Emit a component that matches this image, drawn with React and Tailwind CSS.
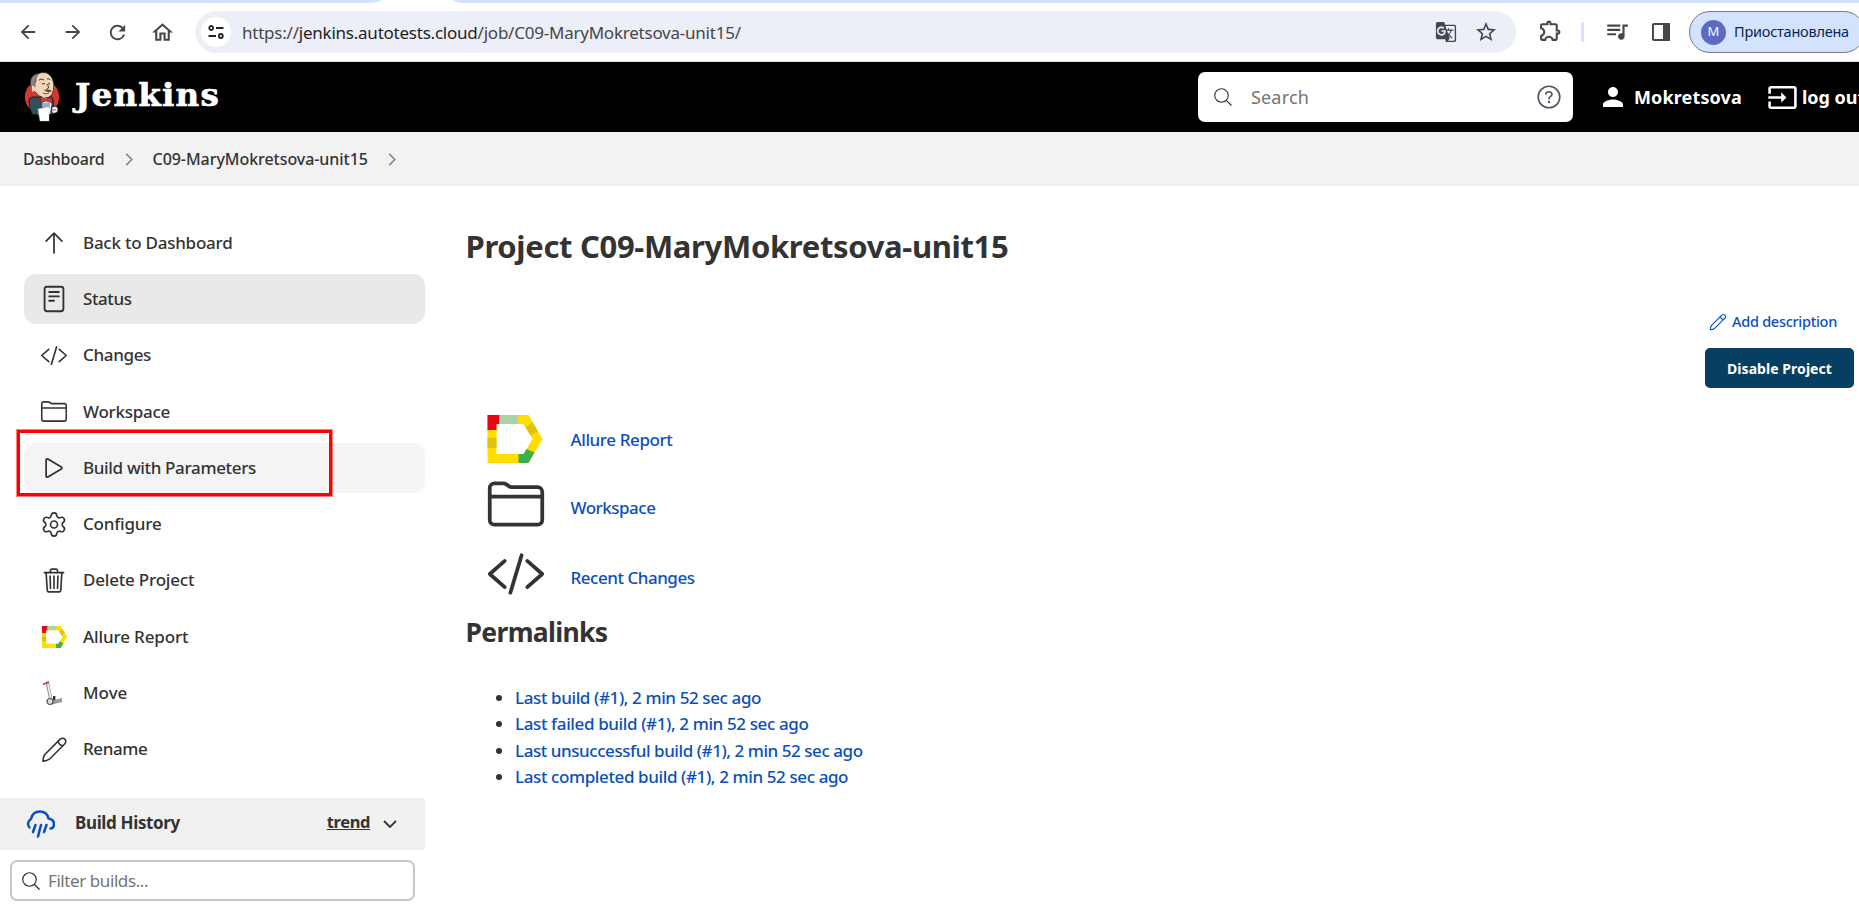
import React from "react";
import { Settings } from "lucide-react";
import {
  MdArrowBack, MdArrowForward, MdRefresh, MdOutlineHome, MdGTranslate,
  MdStarOutline, MdOutlineExtension, MdQueueMusic, MdPerson, MdInput,
} from "react-icons/md";

function Line({ paths, className, width = 32 }) {
  return (
    <svg viewBox="0 0 512 512" className={className} fill="none" stroke="currentColor" strokeWidth={width} strokeLinecap="round" strokeLinejoin="round">
      {paths.map((d) => <path key={d} d={d} />)}
    </svg>
  );
}

const CODE = ["M160 368L32 256l128-112", "M352 368l128-112-128-112", "M304 96l-96 320"];
const FOLDER = [
  "M440 432H72a40 40 0 01-40-40V120a40 40 0 0140-40h75.89a40 40 0 0122.19 6.72l27.84 18.56a40 40 0 0022.19 6.72H440a40 40 0 0140 40v240a40 40 0 01-40 40z",
  "M32 192h448",
];
const PLAY = ["M112 111v290c0 17.44 17 28.52 31 20.16l247.9-148.37c12.12-7.25 12.12-26.33 0-33.58L143 90.84c-14-8.36-31 2.72-31 20.16z"];
const TRASH = [
  "M112 112l20 320c.95 18.49 14.4 32 32 32h184c17.67 0 30.87-13.51 32-32l20-320",
  "M80 112h352",
  "M192 112V72a23.93 23.93 0 0124-24h80a23.93 23.93 0 0124 24v40",
  "M256 176v224M184 176l8 224M328 176l-8 224",
];
const ARROW_UP = ["M112 220L256 76l144 144", "M256 96v340"];
const DOC = ["M128 32h256a44 44 0 0144 44v360a44 44 0 01-44 44H128a44 44 0 01-44-44V76a44 44 0 0144-44z", "M168 128h176M168 208h176M168 288h88"];
const PENCIL = [
  "M36 476Q40 400 72 352L364 60a62 62 0 0188 0 62 62 0 010 88L160 440Q112 472 36 476z",
  "M326 98Q336 180 418 184",
];
const SEARCH = ["M221 64a157 157 0 10157 157A157 157 0 00221 64z", "M338 338L448 448"];

function Allure({ className }) {
  return (
    <svg viewBox="0 0 55 48" className={className}>
      <path d="M0 0H41L55 24L41 48H0ZM9 9V39H36L45 24L36 9Z" fill="#ffdd00" fillRule="evenodd" />
      <path d="M0 0H12V9H9V15H0Z" fill="#e30613" />
      <path d="M12 0H30V9H12Z" fill="#a7d3a6" />
      <path d="M0 23H9V33H0Z" fill="#e0c213" />
      <path d="M38 12.2L45 7L50.500 16.500L43 20.500Z" fill="#e0c213" />
      <path d="M31 39H36L39 34L47 37.500L41 48H31Z" fill="#3eaf49" />
    </svg>
  );
}

function Segway({ className }) {
  return (
    <svg viewBox="0 0 26 26" className={className} fill="none">
      <path d="M2 4.5L6 2.5L8 2" stroke="#b8434a" strokeWidth="1.6" />
      <path d="M6.5 3L10 20" stroke="#8c8c8c" strokeWidth="3.4" />
      <path d="M7 4L10 19" stroke="#eee" strokeWidth="1.8" />
      <path d="M10 21L21 18V22L11 24.5Z" fill="#9a9a9a" />
      <path d="M12 16h2.4v4H12z" fill="#333" />
      <circle cx="9" cy="21.5" r="3" fill="#ddd" stroke="#555" strokeWidth="1.2" />
    </svg>
  );
}

function Butler() {
  return (
    <svg viewBox="0 0 36 50" className="h-[50px] w-9">
      <ellipse cx="18" cy="25" rx="17.2" ry="17" fill="#d33833" />
      <path d="M5 29Q4 26 9 25L28 25Q30 28 29 42Q20 45 8 42Q5 36 5 29Z" fill="#335061" stroke="#111" strokeWidth=".8" />
      <path d="M8 17Q4 5 14 1.5Q24-2 28 6Q31 12 29.5 18Q28 26 21 26Q15 25 12 21L9 18Z" fill="#f0d6b7" stroke="#222" strokeWidth=".8" />
      <path d="M7 16Q4 3 15 1.3Q11 5 12 9Q10 12 11 15L9 18Z" fill="#8a8685" stroke="#222" strokeWidth=".6" />
      <path d="M8 14q3-1 3 2t-2 4q-2-2-1-6z" fill="#f0d6b7" />
      <path d="M15 8q3-2 5 0M23 7q2-1 3 1M18 12q1-1 3 0M24 12q1-1 2 0M23 12q3 4 0 5" stroke="#222" strokeWidth=".9" fill="none" />
      <path d="M20 18q4-2 8 1q-3 3-8-1z" fill="#6d4b3c" />
      <path d="M19 21q3 2 6 0" stroke="#7a2a22" strokeWidth=".8" fill="none" />
      <path d="M18 25L28 28L26 42L19 40Z" fill="#fff" />
      <path d="M16 25l6 2 6-2v6l-6-2-5 2z" fill="#d33833" stroke="#601" strokeWidth=".5" />
      <path d="M18 31l8-1v6h-7z" fill="#8fb0c4" />
      <path d="M14 37L25 35L25 49L16 49Z" fill="#fff" stroke="#ccc" strokeWidth=".4" />
      <path d="M28 35q6-2 6 3q-1 4-6 3z" fill="#fff" stroke="#222" strokeWidth=".7" />
      <path d="M29 38h3" stroke="#222" strokeWidth=".7" />
    </svg>
  );
}

function Chevron({ className }) {
  return (
    <svg viewBox="0 0 8 14" className={className} fill="none" stroke="currentColor" strokeWidth="1.8"><path d="M1 1l6 6-6 6" /></svg>
  );
}

const menu = [
  ["Back to Dashboard", <Line paths={ARROW_UP} className="size-[28px]" />, "", "tracking-[-0.24px]"],
  ["Status", <Line paths={DOC} className="size-[28px]" width={34} />, "bg-[#e9e9e9]", "tracking-[-0.42px]"],
  ["Changes", <Line paths={CODE} className="size-[29px]" width={30} />, "", "tracking-[-0.34px]"],
  ["Workspace", <Line paths={FOLDER} className="size-[29px]" width={28} />, "", "tracking-[-0.26px]"],
  ["Build with Parameters", <Line paths={PLAY} className="size-[28px]" />, "bg-[#f4f4f4]", "tracking-[-0.34px]"],
  ["Configure", <Settings className="size-[29px]" strokeWidth={1.4} />, "", "tracking-[-0.2px]"],
  ["Delete Project", <Line paths={TRASH} className="size-[29px]" width={30} />, "", "tracking-[-0.2px]"],
  ["Allure Report", <Allure className="h-[22px] w-[25px]" />, "", "tracking-[-0.13px]"],
  ["Move", <Segway className="size-[26px]" />, "", ""],
  ["Rename", <Line paths={PENCIL} className="size-[27px]" width={30} />, "", "tracking-[-0.42px]"],
];

const permalinks = [
  ["Last build (#1), 2 min 52 sec ago", "tracking-[-0.39px]"],
  ["Last failed build (#1), 2 min 52 sec ago", "tracking-[-0.38px]"],
  ["Last unsuccessful build (#1), 2 min 52 sec ago", "tracking-[-0.44px]"],
  ["Last completed build (#1), 2 min 52 sec ago", "tracking-[-0.39px]"],
];

export default function App() {
  return (
    <div className="flex h-[907px] w-[1859px] flex-col overflow-hidden bg-white font-['Noto_Sans','Open_Sans',sans-serif] text-[#333]">
      <div className="h-[3px] shrink-0 bg-[#d3e3fd]">
        <svg viewBox="0 0 480 3" className="h-[3px] w-[480px]" fill="#fff"><path d="M0 3Q2 3 10 3ZM372 3Q378 2.5 382 0H452Q456 2.5 462 3Z" /></svg>
      </div>
      <div className="flex h-[58px] shrink-0 items-center bg-white text-[#474747]">
        <MdArrowBack className="ml-[17px] size-[22px] shrink-0" />
        <MdArrowForward className="ml-[23px] size-[22px] shrink-0" />
        <MdRefresh className="ml-[22px] size-[23px] shrink-0" />
        <MdOutlineHome className="ml-[21px] size-[25px] shrink-0" />
        <div className="ml-[20px] flex h-[42px] w-[1321px] shrink-0 items-center rounded-full bg-[#eceef8]">
          <div className="ml-[6px] flex size-[30px] items-center justify-center rounded-full bg-white">
            <svg viewBox="0 0 16 14" className="h-[14px] w-4" fill="none" stroke="#222" strokeWidth="1.8"><circle cx="3.2" cy="3" r="2" /><path d="M8 3h7.5M.5 11H8" /><circle cx="12.8" cy="11" r="2" /></svg>
          </div>
          <span className="ml-[11px] mt-px whitespace-nowrap text-[17px] leading-6 tracking-[-0.23px]">
            <span>https://</span><span className="text-[#1f1f1f]">jenkins.autotests.cloud</span><span>/job/C09-MaryMokretsova-unit15/</span>
          </span>
          <MdGTranslate className="ml-auto size-[22px]" />
          <MdStarOutline className="ml-[17px] mr-[18px] size-[24px]" />
        </div>
        <MdOutlineExtension className="-mt-[3px] ml-[22px] size-[25px] shrink-0" />
        <div className="ml-[18px] h-5 w-[3px] shrink-0 rounded bg-[#d3e3fd]" />
        <MdQueueMusic className="-mt-[3px] ml-[20px] size-[26px] shrink-0" />
        <svg viewBox="0 0 18 18" className="ml-[22px] size-[18px] shrink-0"><rect x="1" y="1" width="16" height="16" rx="1" fill="none" stroke="currentColor" strokeWidth="2" /><path d="M11 0h7v18h-7z" fill="currentColor" /></svg>
        <div className="ml-[19px] flex h-[42px] w-[176px] shrink-0 items-center rounded-full border border-[#777b82] bg-[#d3e3fd]">
          <div className="ml-[11px] flex size-[25px] shrink-0 items-center justify-center rounded-full bg-[#5c6bc0] text-[13px] text-white">M</div>
          <span className="ml-[8px] whitespace-nowrap text-[14.5px] tracking-[-0.23px] text-[#0d2353]">Приостановлена</span>
        </div>
      </div>
      <div className="h-px shrink-0 bg-[#dfe3e0]" />

      <header className="flex h-[70px] shrink-0 items-center bg-black text-white">
        <div className="ml-6 flex items-center"><Butler /></div>
        <span className="-mt-1 ml-[15px] font-['DejaVu_Serif'] text-[32.5px] font-bold leading-10 tracking-[1.2px] [-webkit-text-stroke:0.7px_white]">Jenkins</span>
        <div className="ml-auto mr-[25px] flex h-[50px] w-[375px] items-center rounded-[7px] bg-white">
          <Line paths={SEARCH} className="ml-[14px] size-[22px] text-[#333]" width={26} />
          <span className="ml-[17px] mt-px text-[18px] tracking-[0.17px] text-[#757575]">Search</span>
          <svg viewBox="0 0 24 24" className="ml-auto mr-[12px] size-6" fill="none" stroke="#4d545d" strokeWidth="1.6" strokeLinecap="round"><circle cx="12" cy="12" r="10.8" /><path d="M8.9 9.2Q9.2 6.8 12 6.8Q15 6.9 15 9.3Q15 10.7 13.3 11.6Q12 12.4 12 14" /><circle cx="12" cy="17" r=".5" fill="#4d545d" /></svg>
        </div>
        <div className="flex w-[261px] shrink-0 items-center whitespace-nowrap text-[18px] font-bold">
          <MdPerson className="size-[30px] shrink-0" />
          <span className="ml-[6px] mt-px w-[108px] tracking-[0.13px]">Mokretsova</span>
          <MdInput className="ml-[25px] size-[31px] shrink-0" />
          <span className="ml-[4px] mt-px">log out</span>
        </div>
      </header>

      <nav className="flex h-[54px] shrink-0 items-center bg-[#f2f2f2] pl-[23px] text-[16px] font-medium">
        <span className="tracking-[-0.26px]">Dashboard</span>
        <Chevron className="ml-[20px] h-[13px] w-2 text-[#888]" />
        <span className="ml-[20px] tracking-[-0.05px]">C09-MaryMokretsova-unit15</span>
        <Chevron className="ml-[20px] h-[13px] w-2 text-[#888]" />
      </nav>

      <div className="flex min-h-0 flex-1">
        <aside className="relative w-[425px] shrink-0 pt-[32px]">
          <div className="flex flex-col gap-[6.25px] pl-6">
            {menu.map(([label, icon, bg, tracking]) => (
              <div key={label} className={"flex h-[50px] items-center rounded-xl text-[17px] font-medium " + bg}>
                <div className="ml-4 flex w-[28px] shrink-0 justify-center">{icon}</div>
                <span className={"-mt-px ml-[15px] " + tracking}>{label}</span>
              </div>
            ))}
          </div>
          <div className="absolute left-[17px] top-[244px] h-[66px] w-[315px] border-[3px] border-[#ff0000] shadow-[0_0_0_1px_#ff000080]" />
          <div className="mt-[24px] flex h-[52px] items-center bg-[#f1f1f1] font-bold text-[17px]">
            <svg viewBox="0 0 30 28" className="-mt-px ml-[25px] h-7 w-[30px]" fill="none" stroke="#0b4fc0" strokeWidth="2.5" strokeLinecap="round"><path d="M4.5 17.5A5.5 5.5 0 016 9Q7.5 1.5 15 1.5Q22 1.5 23.5 8.5Q29 9.500 29 14Q29 18 25.500 18.500M10.500 15L8 22M16 15L13 26.500M21.500 15L19 22" /></svg>
            <span className="-mt-1 ml-[20px] tracking-[-0.36px]">Build History</span>
            <span className="-mt-1 ml-auto text-[16.5px] tracking-[-0.4px] underline">trend</span>
            <svg viewBox="0 0 14 8" className="ml-[13px] mr-7 h-2 w-[14px]" fill="none" stroke="currentColor" strokeWidth="1.8"><path d="M1 1l6 6 6-6" /></svg>
          </div>
          <div className="ml-[10px] mt-[10px] flex h-[41px] w-[405px] items-center rounded-[7px] border-2 border-[#bfcacf]">
            <Line paths={SEARCH} className="ml-[8px] size-[22px]" width={28} />
            <span className="ml-[6px] text-[17px] tracking-[-0.42px] text-[#757575]">Filter builds...</span>
          </div>
        </aside>

        <main className="flex flex-1 flex-col pl-[40.5px]">
          <h1 className="mt-[37px] text-[31px] font-bold leading-[46px] tracking-[-0.33px]">Project C09-MaryMokretsova-unit15</h1>
          <div className="mr-[22px] mt-[41px] flex h-6 items-center self-end text-[14.5px] font-medium text-[#0b4fb9]">
            <Line paths={PENCIL} className="size-[18px]" />
            <span className="ml-[5px] tracking-[-0.28px]">Add description</span>
          </div>
          <div className="mr-[5px] mt-[14px] flex h-10 w-[149px] items-center justify-center self-end rounded-[5px] bg-[#073f62] text-[14px] font-bold text-white">
            <span className="tracking-[0.05px]">Disable Project</span>
          </div>
          <div className="mt-[19px] flex flex-col pl-[21px] text-[17px] font-medium text-[#0b4fb9]">
            <div className="flex h-[66px] items-center"><Allure className="-mt-[2px] h-[48px] w-[56px]" /><span className="ml-[28px] tracking-[-0.4px]">Allure Report</span></div>
            <div className="flex h-[68px] items-center"><Line paths={FOLDER} className="-ml-px -mt-[6px] size-[60px] text-[#333]" /><span className="ml-[25px] mt-px tracking-[-0.49px]">Workspace</span></div>
            <div className="flex h-[70px] items-center"><Line paths={CODE} className="-ml-px -mt-[4px] size-[60px] text-[#333]" /><span className="ml-[25px] mt-[3px] tracking-[-0.47px]">Recent Changes</span></div>
          </div>
          <h2 className="mt-[3px] text-[26.5px] font-bold leading-9 tracking-[-0.66px]">Permalinks</h2>
          <ul className="mt-[35px] list-none pl-[30px] text-[17px] font-medium leading-[26.3px]">
            {permalinks.map(([text, tracking]) => (
              <li key={text} className="flex items-center">
                <span className="mr-[13.5px] size-[6px] rounded-full bg-[#333]" />
                <span className={"text-[#0b4fb9] " + tracking}>{text}</span>
              </li>
            ))}
          </ul>
        </main>
      </div>
    </div>
  );
}
